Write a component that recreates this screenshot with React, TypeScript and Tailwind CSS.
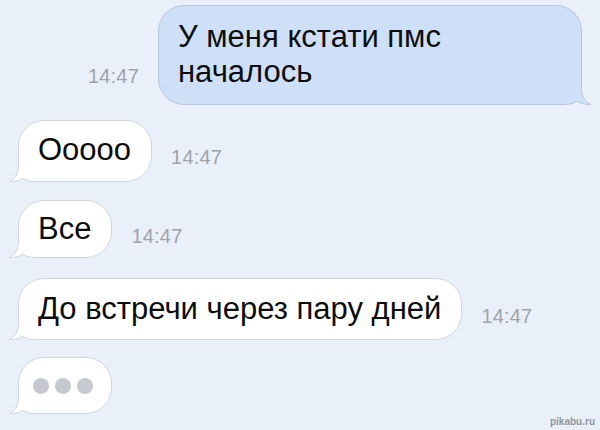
import type { ReactNode } from "react";

const BG = "#eaf0f9";

function Tail({ side, fill, stroke }: { side: "left" | "right"; fill: string; stroke: string }) {
  const edge =
    "M9.5 0 C9.5 7 6.5 12 0.5 15.3 C5.5 15.8 10.5 14.6 14 12.2 C17.5 14.8 22 15.5 28 15.5 L36 15.5";
  return (
    <svg
      width="36"
      height="16"
      viewBox="0 0 36 16"
      className={side === "left" ? "absolute bottom-[-1px] left-[-10px]" : "absolute bottom-[-1px] right-[-10px]"}
    >
      <g transform={side === "left" ? undefined : "translate(36 0) scale(-1 1)"}>
        <rect width="36" height="16" fill={BG} />
        <path d={`${edge} L36 0 L9.5 0 Z`} fill={fill} />
        <path d={edge} fill="none" stroke={stroke} strokeWidth="1" />
      </g>
    </svg>
  );
}

function Time({ className }: { className: string }) {
  return <span className={`text-[20px] leading-none tracking-[0.2px] text-[#9ea3aa] ${className}`}>14:47</span>;
}

function Incoming({ children, className }: { children: ReactNode; className: string }) {
  return (
    <div
      className={`relative rounded-tl-[26px] rounded-tr-[26px] rounded-br-[26px] border border-[#cfd6df] bg-white pl-[19px] pr-[20px] ${className}`}
    >
      <Tail side="left" fill="#ffffff" stroke="#cfd6df" />
      <p className="relative text-[31px] leading-[35px] text-[#0d0d0d]">{children}</p>
    </div>
  );
}

export default function App() {
  return (
    <div className="relative h-[430px] w-[600px] overflow-hidden bg-[#eaf0f9] font-['Liberation_Sans',Arial,sans-serif]">
      <div className="flex flex-col">
        <div className="mt-[5px] flex items-end justify-end gap-[19px] pr-[18px]">
          <Time className="mb-[19px]" />
          <div className="relative h-[100px] w-[424px] rounded-tl-[26px] rounded-tr-[26px] rounded-bl-[26px] border border-[#b6c7dd] bg-[#cee0f7] pl-[19px] pt-[13px]">
            <Tail side="right" fill="#cee0f7" stroke="#b6c7dd" />
            <p className="relative text-[31px] leading-[35px] text-[#0d0d0d]">
              У меня кстати пмс
              <br />
              началось
            </p>
          </div>
        </div>

        <div className="ml-[18px] mt-[15px] flex items-end gap-[19px]">
          <Incoming className="h-[62px] pt-[11px]">Ооооо</Incoming>
          <Time className="mb-[15px]" />
        </div>

        <div className="ml-[18px] mt-[18px] flex items-end gap-[19px]">
          <Incoming className="h-[58px] pt-[10px]">Все</Incoming>
          <Time className="mb-[12px]" />
        </div>

        <div className="ml-[18px] mt-[20px] flex items-end gap-[19px]">
          <Incoming className="h-[62px] pt-[12px]">До встречи через пару дней</Incoming>
          <Time className="mb-[14px]" />
        </div>

        <div className="ml-[18px] mt-[17px] flex">
          <div className="relative flex h-[57px] w-[94px] items-center gap-[6px] rounded-tl-[26px] rounded-tr-[26px] rounded-br-[26px] border border-[#cfd6df] bg-white pl-[14px]">
            <Tail side="left" fill="#ffffff" stroke="#cfd6df" />
            <span className="relative size-[16px] rounded-full bg-[#c6cad0]" />
            <span className="relative size-[16px] rounded-full bg-[#c6cad0]" />
            <span className="relative size-[16px] rounded-full bg-[#c6cad0]" />
          </div>
        </div>
      </div>

      <span className="absolute bottom-[3px] right-[5px] text-[10px] font-bold leading-none text-[#8f959c]">
        pikabu.ru
      </span>
    </div>
  );
}
